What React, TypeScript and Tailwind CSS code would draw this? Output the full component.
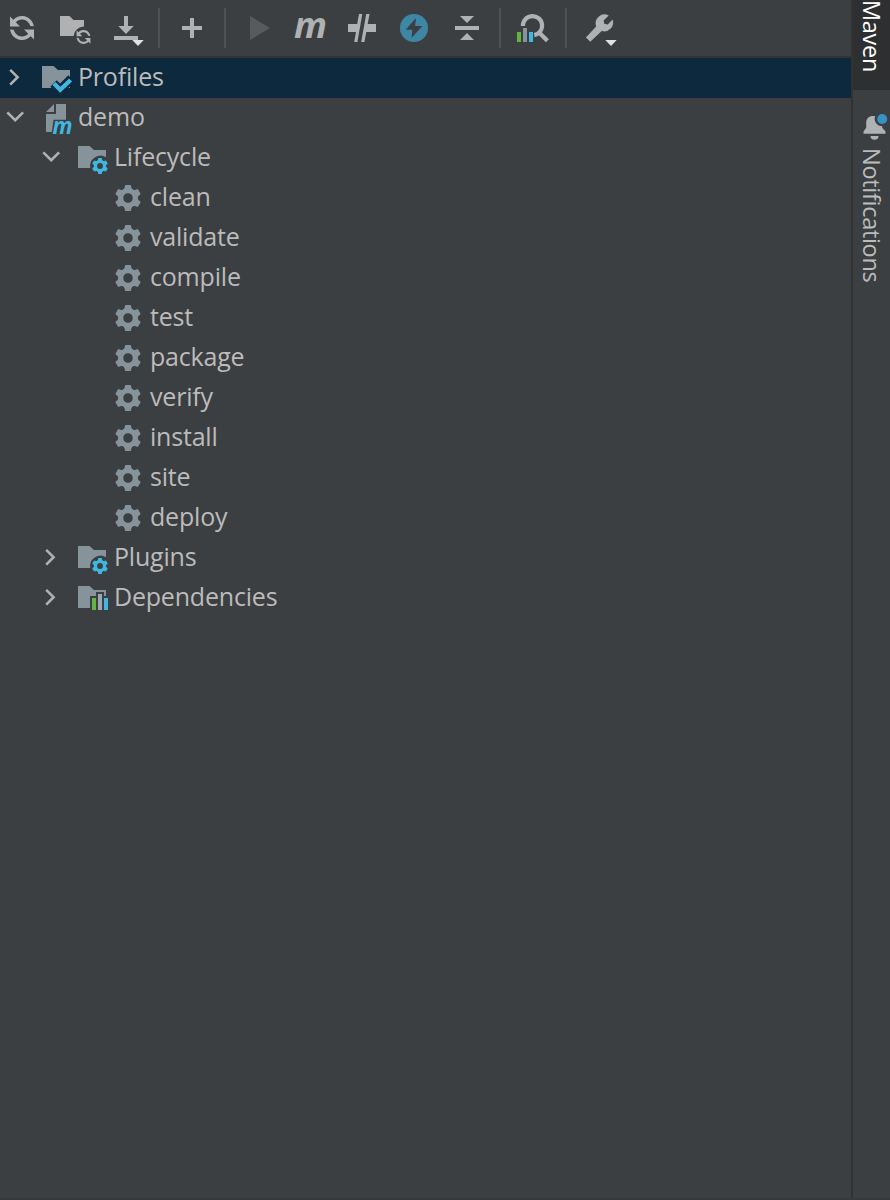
import React, { useState } from 'react';
import clsx from 'clsx';

const FOLDER = 'M2 4h11.5l4.5 4h12v18H2z';

const Svg = ({ children }: { children: React.ReactNode }) => (
  <svg className="size-8 shrink-0 overflow-visible" viewBox="0 0 32 32" fill="currentColor">
    {children}
  </svg>
);

const RefreshShape = () => (
  <g transform="scale(2) rotate(3 8.002 8.004)">
    <path d="M12.575 11.885C11.474 13.182 9.832 14.004 7.999 14.004C5.039 14.004 2.58 11.862 2.088 9.043L3.948 9.108C4.434 10.89 6.064 12.2 8 12.2C9.301 12.2 10.465 11.608 11.235 10.679L9.05 8.712L14.043 8.45L14.305 13.443Z" />
    <path d="M3.428 4.117C4.528 2.825 6.168 2.004 7.999 2.004C10.919 2.004 13.351 4.09 13.888 6.853L12.023 6.788C11.502 5.059 9.898 3.8 8 3.8C6.699 3.8 5.535 4.392 4.765 5.321L6.955 7.293L1.962 7.555L1.7 2.562Z" />
  </g>
);

const GearShape = () => (
  <g>
    <circle cx="16" cy="16" r="7.4" fill="none" stroke="currentColor" strokeWidth="5.2" />
    {[0, 60, 120, 180, 240, 300].map(angle => (
      <path key={angle} d="M13.2 3h5.6l.8 3.2 1.6 2.8H10.8l1.6-2.8z" transform={`rotate(${angle} 16 16)`} />
    ))}
  </g>
);

const DropdownMark = () => <path d="M22.3 28h11.4L28 34z" fill="#dfe1e2" />;

const ChartBars = () => (
  <>
    <path d="M0 20h4v10H0z" fill="#62b543" />
    <path d="M6 16h4v14H6z" fill="#87939a" />
    <path d="M12 20h4v10h-4z" fill="#40b6e0" />
  </>
);

type ToolItem = { label: string; icon: React.ReactNode; className?: string };

const TOOLS: (ToolItem | null)[] = [
  { label: 'Reload', icon: <RefreshShape /> },
  {
    label: 'Generate Sources',
    className: 'ml-5',
    icon: (
      <>
        <path d="M2 4h9.5l4 4H26v6.6A10.4 10.4 0 0 0 15.6 24H2z" />
        <g transform="translate(16.3 15.8) scale(.575)">
          <RefreshShape />
        </g>
      </>
    ),
  },
  {
    label: 'Download',
    className: 'ml-5',
    icon: (
      <>
        <path d="M14 4h4v10h5.7L16 22l-7.7-8H14zM4 24h24v4H4z" />
        <DropdownMark />
      </>
    ),
  },
  null,
  { label: 'Add', icon: <path d="M14 6h4v8h8v4h-8v8h-4v-8H6v-4h8z" /> },
  null,
  { label: 'Run', icon: <path d="M8 4l20 12L8 28z" fill="#585a5b" /> },
  {
    label: 'Execute Goal',
    className: 'ml-5',
    icon: (
      <text x="0" y="26" fontSize="36.5" textLength="33" lengthAdjust="spacingAndGlyphs" className="font-['Open_Sans',sans-serif] font-bold italic">
        m
      </text>
    ),
  },
  {
    label: 'Skip Tests',
    className: 'ml-5',
    icon: <path d="M2 12h9.2l1.8-10h3.3L11.4 30H8.2L10 20H2zM20.2 2h3.3l-1.8 10H30v8h-9.7l-1.9 10h-3.2z" />,
  },
  {
    label: 'Offline Mode',
    className: 'ml-5',
    icon: (
      <>
        <circle cx="16" cy="16" r="14" fill="#3d87a5" />
        <path d="M18 6L7.7 17.7h6.6L13.6 26l10.8-12H17z" fill="#3c3f41" />
      </>
    ),
  },
  {
    label: 'Collapse All',
    className: 'ml-[21px]',
    icon: <path d="M9 4h14l-7 7zM4 14h24v4H4zM16 21l7 7H9z" />,
  },
  null,
  {
    label: 'Analyze Dependencies',
    icon: (
      <>
        <path d="M5.9 14a9.6 9.6 0 1 1 11.3 9.1M21.8 20.2l8.6 8.6" fill="none" stroke="currentColor" strokeWidth="4.2" />
        <ChartBars />
      </>
    ),
  },
  null,
  {
    label: 'Settings',
    icon: (
      <>
        <path d="M25.7 3.4L20.6 8.5l.7 3.3 3.4.7 4.9-5A8.9 8.9 0 0 1 18.7 19L7.3 29.8 2.9 25.4 13.2 14.6A9 9 0 0 1 25.7 3.4z" />
        <DropdownMark />
      </>
    ),
  },
];

const FolderGear = () => (
  <Svg>
    <path d="M2 4h11.5l4.5 4h12v7.2A10.6 10.6 0 0 0 14.2 26H2z" />
    <g className="text-[#40b6e0]" transform="translate(24 24) scale(.61) translate(-16 -16)">
      <GearShape />
    </g>
  </Svg>
);

const ICONS = {
  profiles: (
    <Svg>
      <path d={FOLDER} />
      <path d="M13.5 21.5l6.5 6.5L31.5 16.5" fill="none" stroke="#0d293e" strokeWidth="9" />
      <path d="M14 21.5l6.2 6.3L30.6 18" fill="none" stroke="#40b6e0" strokeWidth="4.3" />
    </Svg>
  ),
  module: (
    <Svg>
      <path d="M6 10l8-8v8zM16 2h10v15.8H13.5L11.8 30H6V12h10z" />
      <text x="12.6" y="32" fontSize="23" textLength="20" lengthAdjust="spacingAndGlyphs" fill="#40b6e0" className="font-['Open_Sans',sans-serif] font-bold italic">
        m
      </text>
    </Svg>
  ),
  folderGear: <FolderGear />,
  goal: (
    <Svg>
      <GearShape />
    </Svg>
  ),
  dependencies: (
    <Svg>
      <path d="M2 4h11.5l4.5 4h12v6h-2v-4h-8v4h-6v12H2z" />
      <path d="M16 16h4v12h-4z" fill="#62b543" />
      <path d="M22 12h4v16h-4z" fill="#9aa7b0" />
      <path d="M28 16h4v12h-4z" fill="#40b6e0" />
    </Svg>
  ),
};

type Row = { label: string; icon: keyof typeof ICONS; depth: number; arrow?: 'open' | 'closed' };

const GOALS = ['clean', 'validate', 'compile', 'test', 'package', 'verify', 'install', 'site', 'deploy'];

const ROWS: Row[] = [
  { label: 'Profiles', icon: 'profiles', depth: 0, arrow: 'closed' },
  { label: 'demo', icon: 'module', depth: 0, arrow: 'open' },
  { label: 'Lifecycle', icon: 'folderGear', depth: 1, arrow: 'open' },
  ...GOALS.map((label): Row => ({ label, icon: 'goal', depth: 2 })),
  { label: 'Plugins', icon: 'folderGear', depth: 1, arrow: 'closed' },
  { label: 'Dependencies', icon: 'dependencies', depth: 1, arrow: 'closed' },
];

const INDENT = ['pl-0', 'pl-9', 'pl-[72px]'];

const Chevron = ({ arrow }: { arrow?: Row['arrow'] }) => (
  <svg className="mr-2 size-8 shrink-0" viewBox="0 0 32 32" fill="none" stroke="#afb1b3" strokeWidth="2.6">
    {arrow === 'closed' && <path d="M10.2 7.8l7.4 7.4-7.4 7.4" />}
    {arrow === 'open' && <path d="M7.3 10.4l7.9 7.7 7.9-7.7" />}
  </svg>
);

const Toolbar = () => (
  <div className="flex h-[58px] items-center border-b-2 border-[#323232] pl-1.5 text-[#afb1b3]">
    {TOOLS.map((tool, index) =>
      tool ? (
        <button key={index} type="button" aria-label={tool.label} className={clsx('shrink-0', tool.className)}>
          <Svg>{tool.icon}</Svg>
        </button>
      ) : (
        <div key={index} className="mx-4 h-10 w-0.5 shrink-0 bg-[#515151]" />
      )
    )}
  </div>
);

const SideStripe = () => (
  <div className="flex w-[39px] shrink-0 flex-col border-l-2 border-[#323232] text-[23.5px] leading-[37px] tracking-[-0.3px]">
    <div className="h-[90px] bg-[#2d2f30] text-white [writing-mode:vertical-rl]">Maven</div>
    <div className="flex flex-col items-center pt-[22px] text-[#afb1b3]">
      <svg className="h-8 w-8 overflow-visible" viewBox="0 0 32 32" fill="currentColor">
        <path d="M7.5 21.5v-2l2.7-3.8v-5C10.2 6.5 13 4 17 4h2.2A7.4 7.4 0 0 0 26.2 14.2V15.7l3.3 3.8v2.3H7.5zM14.5 24h8a4 3.8 0 0 1-8 0z" />
        <circle cx="26.2" cy="7" r="5" fill="#3592c4" />
      </svg>
      <div className="mt-1 text-[#bbbbbb] [writing-mode:vertical-rl]">Notifications</div>
    </div>
  </div>
);

export default function App() {
  const [selected, setSelected] = useState('Profiles');

  return (
    <div className="flex h-[1200px] w-[890px] overflow-hidden border-b-2 border-[#37393b] bg-[#3c3f41] font-['Open_Sans','Noto_Sans',sans-serif] text-[#bbbbbb]">
      <div className="min-w-0 flex-1">
        <Toolbar />
        <div role="tree">
          {ROWS.map(row => (
            <div
              key={row.label}
              role="treeitem"
              aria-selected={selected === row.label}
              onClick={() => setSelected(row.label)}
              className={clsx('flex h-10 items-center', INDENT[row.depth], selected === row.label && 'bg-[#0d293e]')}
            >
              <Chevron arrow={row.arrow} />
              <span className="flex text-[#87939a]">{ICONS[row.icon]}</span>
              <span className="ml-1.5 pb-1 text-[25px] leading-9 tracking-[-0.2px]">{row.label}</span>
            </div>
          ))}
        </div>
      </div>
      <SideStripe />
    </div>
  );
}
